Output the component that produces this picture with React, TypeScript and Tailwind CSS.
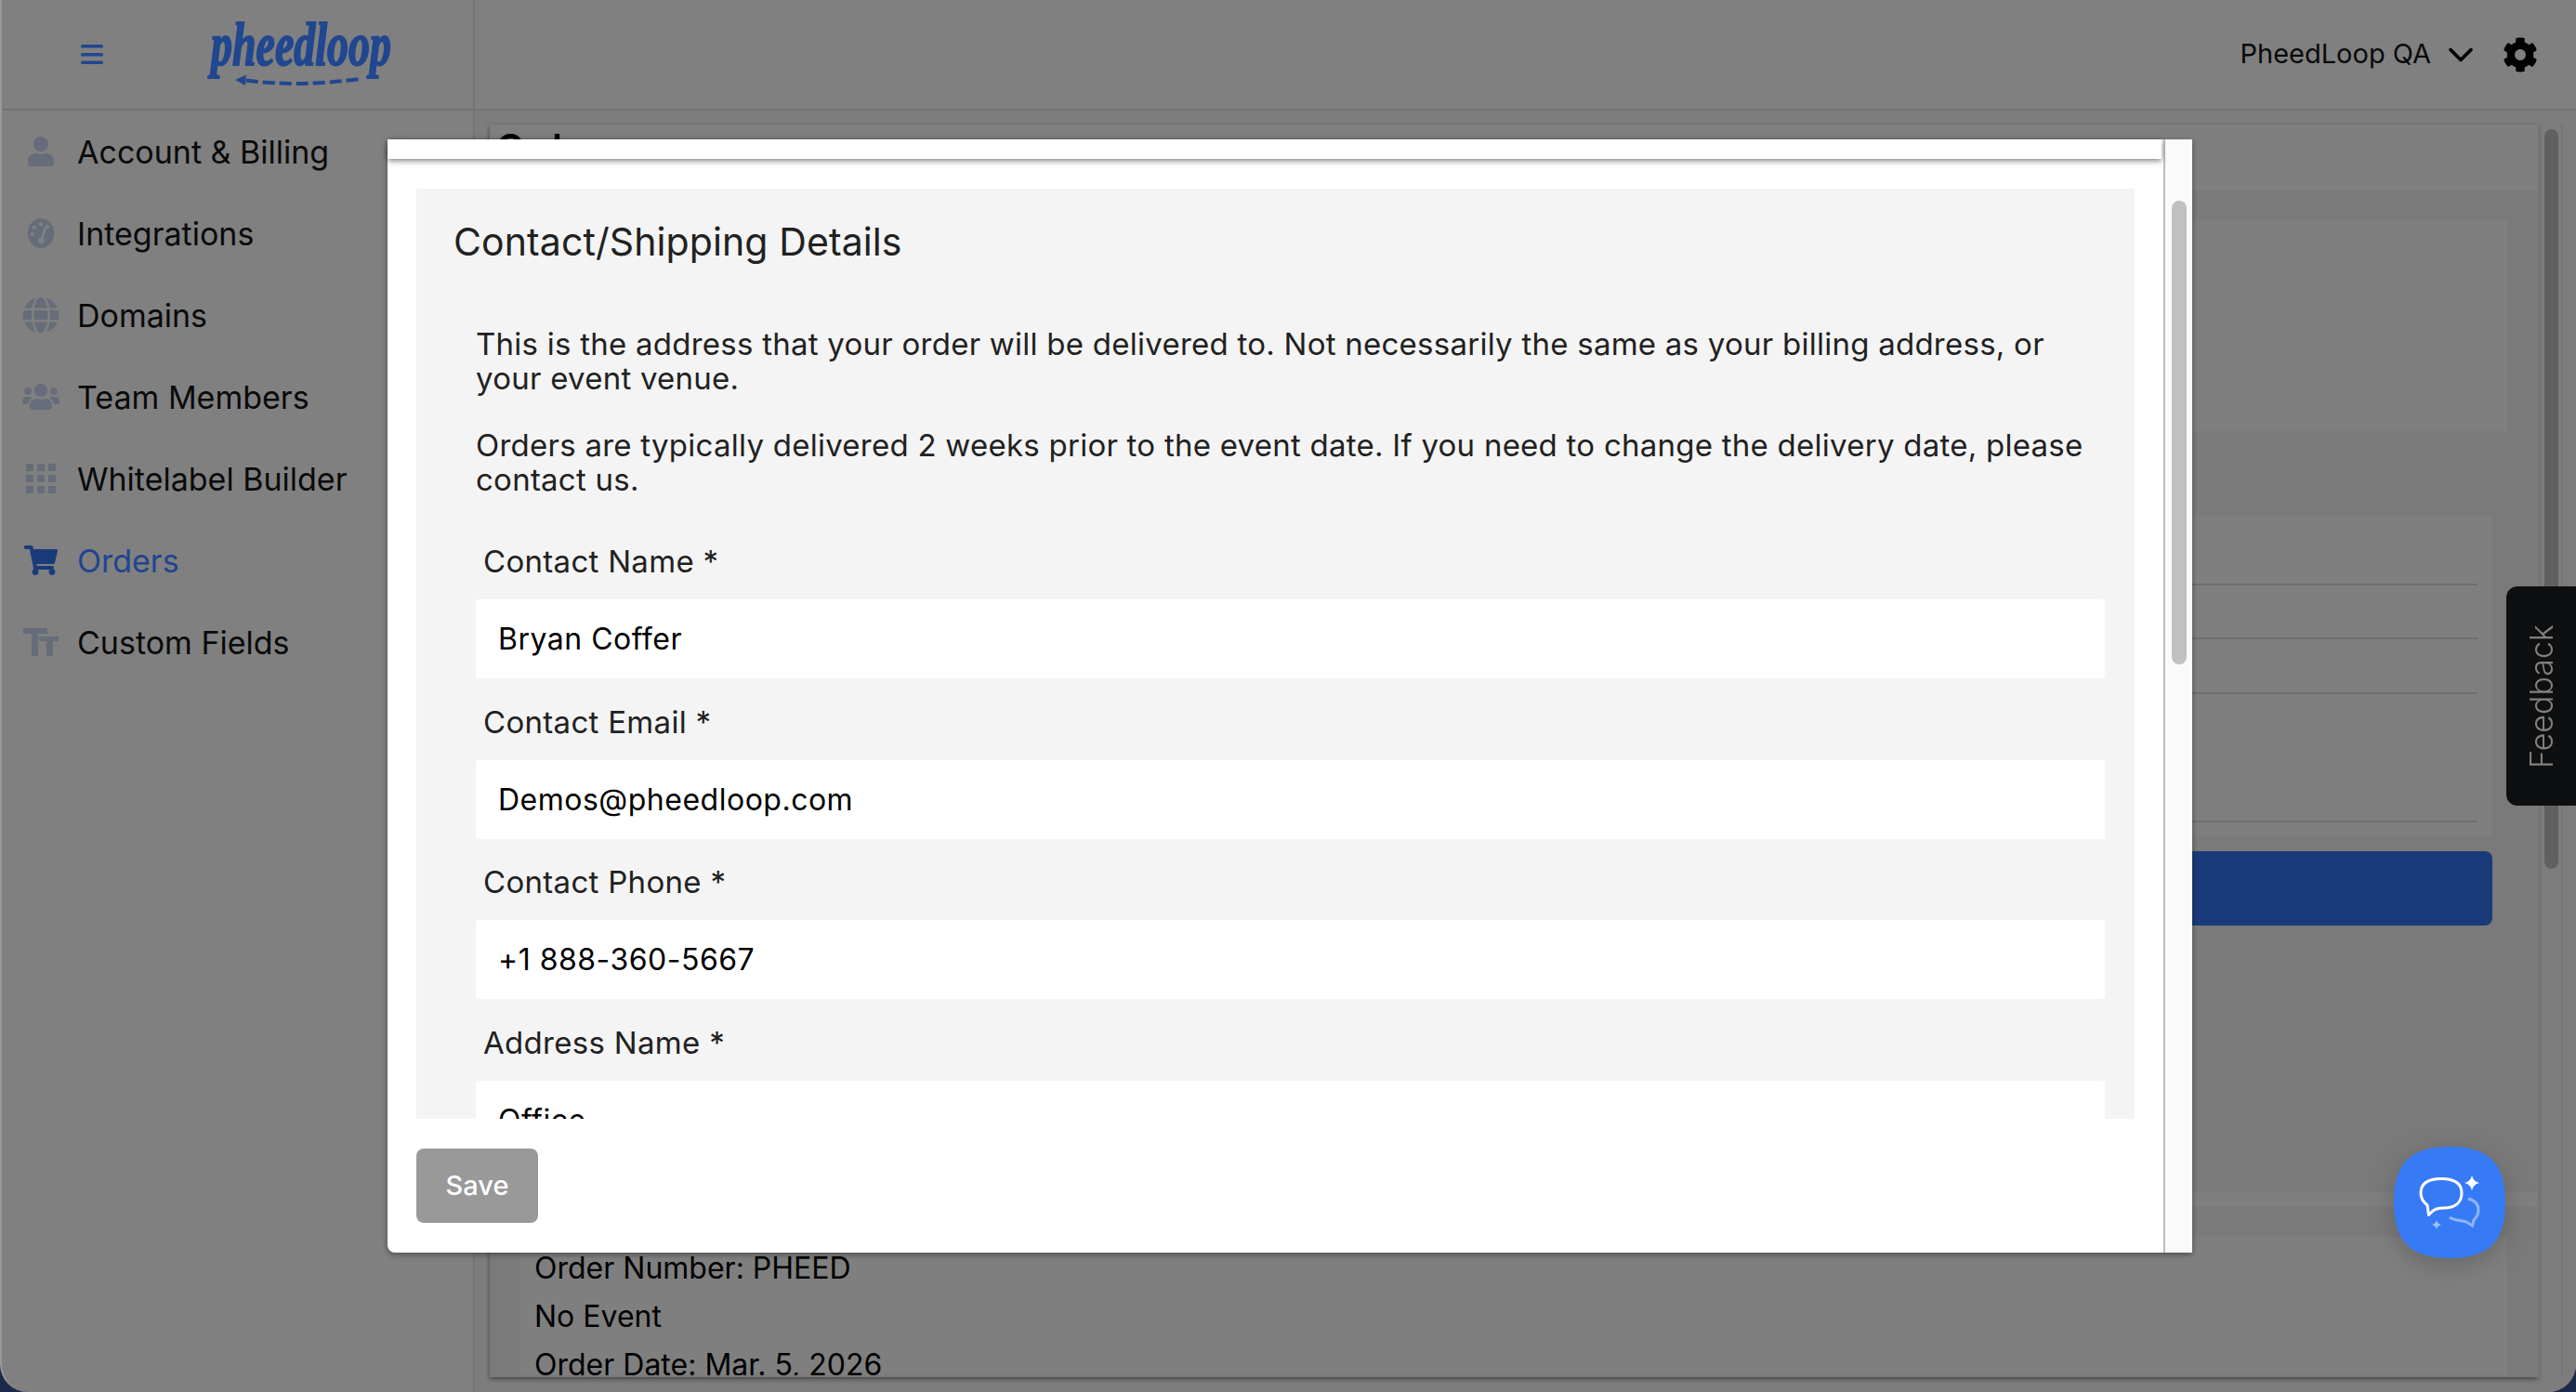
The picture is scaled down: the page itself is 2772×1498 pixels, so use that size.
import { ChevronDown } from "lucide-react";
import { FaCog, FaGlobe, FaShoppingCart, FaUser, FaUsers } from "react-icons/fa";

const GaugeIcon = () => (
  <svg viewBox="0 0 32 36" className="h-8 w-8 text-[#666c79]">
    <ellipse cx="16" cy="18" rx="16" ry="18" fill="currentColor" />
    <circle cx="16" cy="7" r="2.4" fill="#808080" />
    <circle cx="8" cy="11" r="2.4" fill="#808080" />
    <circle cx="5.5" cy="19" r="2.4" fill="#808080" />
    <circle cx="24" cy="10" r="2.4" fill="#808080" />
    <path d="M21 12 L17.5 25" stroke="#808080" strokeWidth="3" strokeLinecap="round" />
    <circle cx="16.5" cy="27" r="3.6" fill="#808080" />
  </svg>
);

const GridIcon = () => (
  <div className="grid h-8 w-8 grid-cols-3 gap-1">
    {[0, 1, 2, 3, 4, 5, 6, 7, 8].map((i) => (
      <div key={i} className="bg-[#666c79]" />
    ))}
  </div>
);

const TextFieldsIcon = () => (
  <svg viewBox="0 0 38 30" className="h-[30px] w-[38px] text-[#666c79]" fill="currentColor">
    <rect x="0" y="0" width="26" height="6" />
    <rect x="9" y="0" width="7" height="30" />
    <rect x="17" y="9" width="21" height="5" />
    <rect x="25" y="9" width="7" height="21" />
  </svg>
);

const navItems = [
  { label: "Account & Billing", icon: <FaUser className="h-8 w-8 text-[#666c79]" /> },
  { label: "Integrations", icon: <GaugeIcon /> },
  { label: "Domains", icon: <FaGlobe className="h-10 w-10 text-[#666c79]" /> },
  { label: "Team Members", icon: <FaUsers className="h-10 w-10 text-[#666c79]" /> },
  { label: "Whitelabel Builder", icon: <GridIcon /> },
  { label: "Orders", icon: <FaShoppingCart className="h-8 w-9 text-[#1a3b7a]" />, active: true },
  { label: "Custom Fields", icon: <TextFieldsIcon /> },
];

const fields = [
  { label: "Contact Name *", value: "Bryan Coffer" },
  { label: "Contact Email *", value: "Demos@pheedloop.com" },
  { label: "Contact Phone *", value: "+1 888-360-5667" },
  { label: "Address Name *", value: "Office" },
];

const Logo = () => (
  <svg viewBox="0 0 200 70" className="h-[70px] w-[200px] overflow-visible" aria-label="pheedloop">
    <text
      x="3"
      y="47"
      textLength="194"
      lengthAdjust="spacingAndGlyphs"
      fontFamily="'Liberation Serif', serif"
      fontStyle="italic"
      fontWeight="700"
      fontSize="66"
      fill="#20478f"
      stroke="#20478f"
      strokeWidth="2"
      strokeLinejoin="round"
    >
      pheedloop
    </text>
    <path d="M41 63.5 Q96 71 164 62" fill="none" stroke="#20478f" strokeWidth="4" strokeDasharray="13 5" />
    <path d="M29 63 L41 57.5 L40 69 Z" fill="#20478f" />
  </svg>
);

const ChatButton = () => (
  <svg viewBox="0 0 120 120" className="h-[120px] w-[120px] drop-shadow-[0_8px_14px_rgba(0,0,0,0.18)]">
    <path d="M60 0 C102 0 120 18 120 60 C120 102 102 120 60 120 C18 120 0 102 0 60 C0 18 18 0 60 0Z" fill="#377af6" />
    <path
      d="M51 34.5 C66 34.5 73 40 73 50 C73 60 66 66 53 66 C47 66 44 67 41 70 L37.5 73.5 L36 63 C31 59 29 55 29 50 C29 40 36 34.5 51 34.5Z"
      fill="none"
      stroke="#fff"
      strokeWidth="3"
      strokeLinejoin="round"
    />
    <path d="M84 31 Q85.5 37.5 92 39 Q85.5 40.5 84 47 Q82.5 40.5 76 39 Q82.5 37.5 84 31Z" fill="#fff" />
    <path d="M46 79 Q47 83 51 84 Q47 85 46 89 Q45 85 41 84 Q45 83 46 79Z" fill="#9fc0fb" />
    <path
      d="M80 56 C88 58 91 62 91 68 C91 73 89 76 86 79 L84.5 85 L78 81 C72 79 66 80 60 76"
      fill="none"
      stroke="#8fb6fb"
      strokeWidth="3"
    />
  </svg>
);

const OrderRow = ({ h }: { h: string }) => <div className={`${h} border-b-2 border-[#6e6e6e]`} />;

export default function App() {
  return (
    <div className="relative h-[1498px] w-[2772px] overflow-hidden bg-[#1b2a4a] font-[Inter,sans-serif] text-[#0a0a0a]">
      <div className="flex h-full flex-col overflow-hidden rounded-b-[30px] border-l-2 border-[#999] bg-[#808080]">
        <header className="flex h-[119px] shrink-0 items-center border-b-2 border-[#737373]">
          <div className="flex h-full w-[509px] items-center border-r-2 border-[#737373]">
            <svg viewBox="0 0 24 21" className="ml-[85px] h-[21px] w-6" fill="#20478f">
              <rect y="0" width="24" height="3.5" rx="1.5" />
              <rect y="9" width="24" height="3.5" rx="1.5" />
              <rect y="17.5" width="24" height="3.5" rx="1.5" />
            </svg>
            <div className="ml-[113px] mt-[-1px]">
              <Logo />
            </div>
          </div>
          <div className="ml-auto flex items-center pr-[41px]">
            <span className="mt-[-2px] text-[29px]">PheedLoop QA</span>
            <ChevronDown className="ml-[10px] h-11 w-11 text-black" strokeWidth={2} />
            <FaCog className="ml-[23px] h-[38px] w-[38px] text-black" />
          </div>
        </header>

        <div className="flex min-h-0 flex-1">
          <aside className="w-[509px] shrink-0 border-r-2 border-[#737373]">
            {navItems.map((item) => (
              <div key={item.label} className="flex h-[88px] items-center">
                <div className="ml-[22px] flex w-10 justify-center">{item.icon}</div>
                <span className={`ml-[19px] text-[34px] ${item.active ? "text-[#20458f]" : ""}`}>{item.label}</span>
              </div>
            ))}
          </aside>

          <main className="flex min-w-0 flex-1 bg-[#7d7d7d] pb-4 pl-4 pr-[14px] pt-[15px]">
            <div className="min-w-0 flex-1 overflow-hidden bg-[#7a7a7a] shadow-[0_2px_5px_rgba(0,0,0,0.45)]">
              <div className="h-[71px] bg-[#7f7f7f] pl-[7px] pt-[1px] text-[40px] font-semibold leading-[48px] text-black">
                Orders
              </div>
              <div className="ml-8 mr-[33px] mt-8 h-[227px] bg-[#7f7f7f]" />
              <div className="ml-8 mr-[49px] mt-[91px] h-[345px] bg-[#7f7f7f] pr-4">
                <OrderRow h="h-[75px]" />
                <OrderRow h="h-[58px]" />
                <OrderRow h="h-[59px]" />
                <OrderRow h="h-[138px]" />
              </div>
              <div className="ml-8 mr-[49px] mt-4 h-20 rounded-lg bg-[#1a3b7a]" />
              <div className="mt-[287px] h-[15px] bg-[#7f7f7f]" />
              <div className="ml-8 mr-[33px] mt-[33px] h-[149px] overflow-hidden bg-[#7f7f7f] pl-4 pt-2 text-[32px] leading-[52px] text-black">
                <div>Order Number: PHEED</div>
                <div>No Event</div>
                <div>Order Date: Mar. 5, 2026</div>
              </div>
            </div>
            <div className="w-[27px] shrink-0 border-x-2 border-[#757575] px-[5px] pt-[5px]">
              <div className="h-[796px] w-[15px] rounded-full bg-[#606060]" />
            </div>
          </main>
        </div>
      </div>

      <div className="absolute left-[417px] top-[150px] flex h-[1198px] w-[1942px] rounded-l-lg bg-white text-[#212121] shadow-[0_2px_6px_rgba(0,0,0,0.4)]">
        <div className="flex min-w-0 flex-1 flex-col border-r-2 border-[#bdbdbd]">
          <div className="mr-[2px] h-[21px] shrink-0 bg-white shadow-[0_2px_6px_rgba(0,0,0,0.5)]" />
          <div className="ml-[31px] mr-[31px] mt-8 h-[1001px] overflow-hidden bg-[#f4f4f4]">
            <h2 className="ml-10 mt-[33px] text-[41px] leading-[48px] tracking-[0.1px]">Contact/Shipping Details</h2>
            <div className="ml-16 mt-[68px] whitespace-nowrap text-[33px] leading-[37px] tracking-[0.25px]">
              <p>
                This is the address that your order will be delivered to. Not necessarily the same as your billing address, or
                <br />
                your event venue.
              </p>
              <p className="mt-[35px]">
                Orders are typically delivered 2 weeks prior to the event date. If you need to change the delivery date, please
                <br />
                contact us.
              </p>
            </div>
            <div className="ml-16 mr-8 mt-[49px]">
              {fields.map((field) => (
                <div key={field.label} className="mb-[26.5px]">
                  <label className="ml-2 block text-[33px] leading-10 tracking-[0.3px]">{field.label}</label>
                  <input
                    readOnly
                    value={field.value}
                    className="mt-[21px] block h-[85px] w-full rounded bg-white px-6 text-[32px] tracking-[0.5px] text-black outline-none"
                  />
                </div>
              ))}
            </div>
          </div>
          <div className="ml-[31px] mt-8">
            <button className="h-20 w-[131px] rounded-lg bg-[#999] text-[29px] font-medium text-white">Save</button>
          </div>
        </div>
        <div className="w-[29px] shrink-0 bg-[#fafafa] pl-[7px] pt-[66px]">
          <div className="h-[499px] w-4 rounded-full bg-[#c0c0c0]" />
        </div>
      </div>

      <div className="absolute right-0 top-[631px] flex h-[236px] w-[75px] items-center justify-center rounded-l-xl bg-[#0e0f10] text-[34px] font-light text-[#808080]">
        <span className="rotate-180 [writing-mode:vertical-rl]">Feedback</span>
      </div>

      <div className="absolute left-[2576px] top-[1234px]">
        <ChatButton />
      </div>
    </div>
  );
}
